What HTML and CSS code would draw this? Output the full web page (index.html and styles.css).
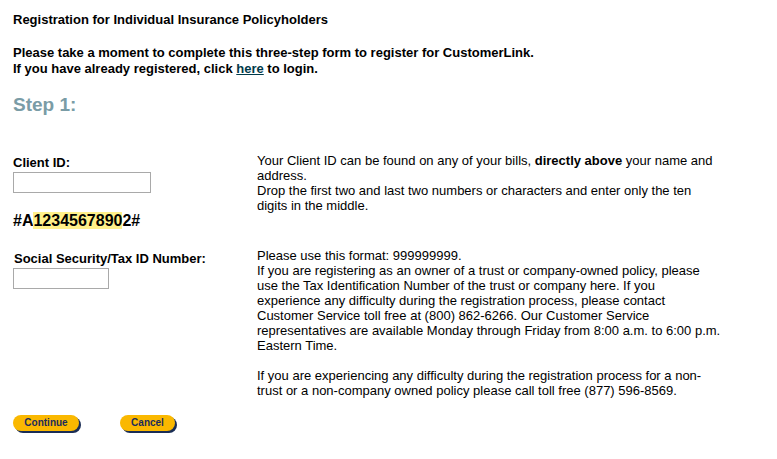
FILE: index.html
```html
<!DOCTYPE html>
<html>
<head>
<meta charset="utf-8">
<link rel="stylesheet" href="styles.css">
</head>
<body>
<div class="page">
  <div class="title">Registration for Individual Insurance Policyholders</div>
  <div class="intro">Please take a moment to complete this three-step form to register for CustomerLink.<br>If you have already registered, click <a href="#" class="link">here</a> to login.</div>
  <div class="step">Step 1:</div>

  <div class="row row-client">
    <div class="left">
      <div class="label">Client ID:</div>
      <input type="text" class="input input-client">
      <div class="sample">#A<span class="hl">1234567890</span>2#</div>
    </div>
    <div class="right">
      Your Client ID can be found on any of your bills, <b>directly above</b> your name and address.<br>
      Drop the first two and last two numbers or characters and enter only the ten digits in the middle.
    </div>
  </div>

  <div class="row row-ssn">
    <div class="left">
      <div class="label label-ssn">Social Security/Tax ID Number:</div>
      <input type="text" class="input input-ssn">
    </div>
    <div class="right">
      Please use this format: 999999999.<br>
      If you are registering as an owner of a trust or company-owned policy, please use the Tax Identification Number of the trust or company here. If you experience any difficulty during the registration process, please contact Customer Service toll free at (800) 862-6266. Our Customer Service representatives are available Monday through Friday from 8:00 a.m. to 6:00 p.m. Eastern Time.<br><br>
      If you are experiencing any difficulty during the registration process for a non-trust or a non-company owned policy please call toll free (877) 596-8569.
    </div>
  </div>

  <div class="buttons">
    <span class="btn btn-continue">Continue</span>
    <span class="btn btn-cancel">Cancel</span>
  </div>

  <div class="note">Please Note:</div>
</div>
</body>
</html>
```

FILE: styles.css
```css
html, body {
  margin: 0;
  padding: 0;
  background: #ffffff;
}
body {
  font-family: "Liberation Sans", Arial, sans-serif;
  font-size: 13px;
  color: #000000;
}
.page {
  padding: 12px 0 0 13px;
  width: 750px;
}
.title {
  font-weight: bold;
  line-height: 16px;
}
.intro {
  font-weight: bold;
  line-height: 16px;
  margin-top: 17px;
}
.link {
  color: #003a4a;
  text-decoration: underline;
}
.step {
  font-size: 19px;
  font-weight: bold;
  color: #7a9ca6;
  margin-top: 17px;
  line-height: 22px;
}
.row {
  display: flex;
}
.left {
  width: 244px;
  flex: none;
}
.right {
  width: 464px;
  line-height: 15px;
}
.row-client {
  margin-top: 37px;
}
.label {
  font-weight: bold;
  line-height: 15px;
  margin-top: 2px;
}
.input {
  display: block;
  box-sizing: border-box;
  height: 21px;
  border: 1px solid #a9a9a9;
  padding: 0;
  margin: 2px 0 0 0;
  background: #fff;
}
.input-client {
  width: 138px;
}
.input-ssn {
  width: 96px;
}
.sample {
  font-weight: bold;
  font-size: 16px;
  line-height: 19px;
  margin-top: 18px;
}
.hl {
  background: #fff08a;
}
.row-ssn {
  margin-top: 18px;
}
.label-ssn {
  margin-left: 1px;
  margin-top: 3px;
}
.buttons {
  display: flex;
  gap: 41px;
  margin-top: 17px;
}
.btn {
  display: inline-block;
  background: #fab800;
  color: #1a2c5c;
  font-weight: bold;
  font-size: 10px;
  line-height: 16px;
  height: 16px;
  border-radius: 8px;
  box-shadow: 2px 2px 0 #1a2d55;
  text-align: center;
}
.btn-continue {
  width: 66px;
}
.btn-cancel {
  width: 55px;
}
.note {
  font-weight: bold;
  line-height: 16px;
  margin-top: 25px;
}
```
